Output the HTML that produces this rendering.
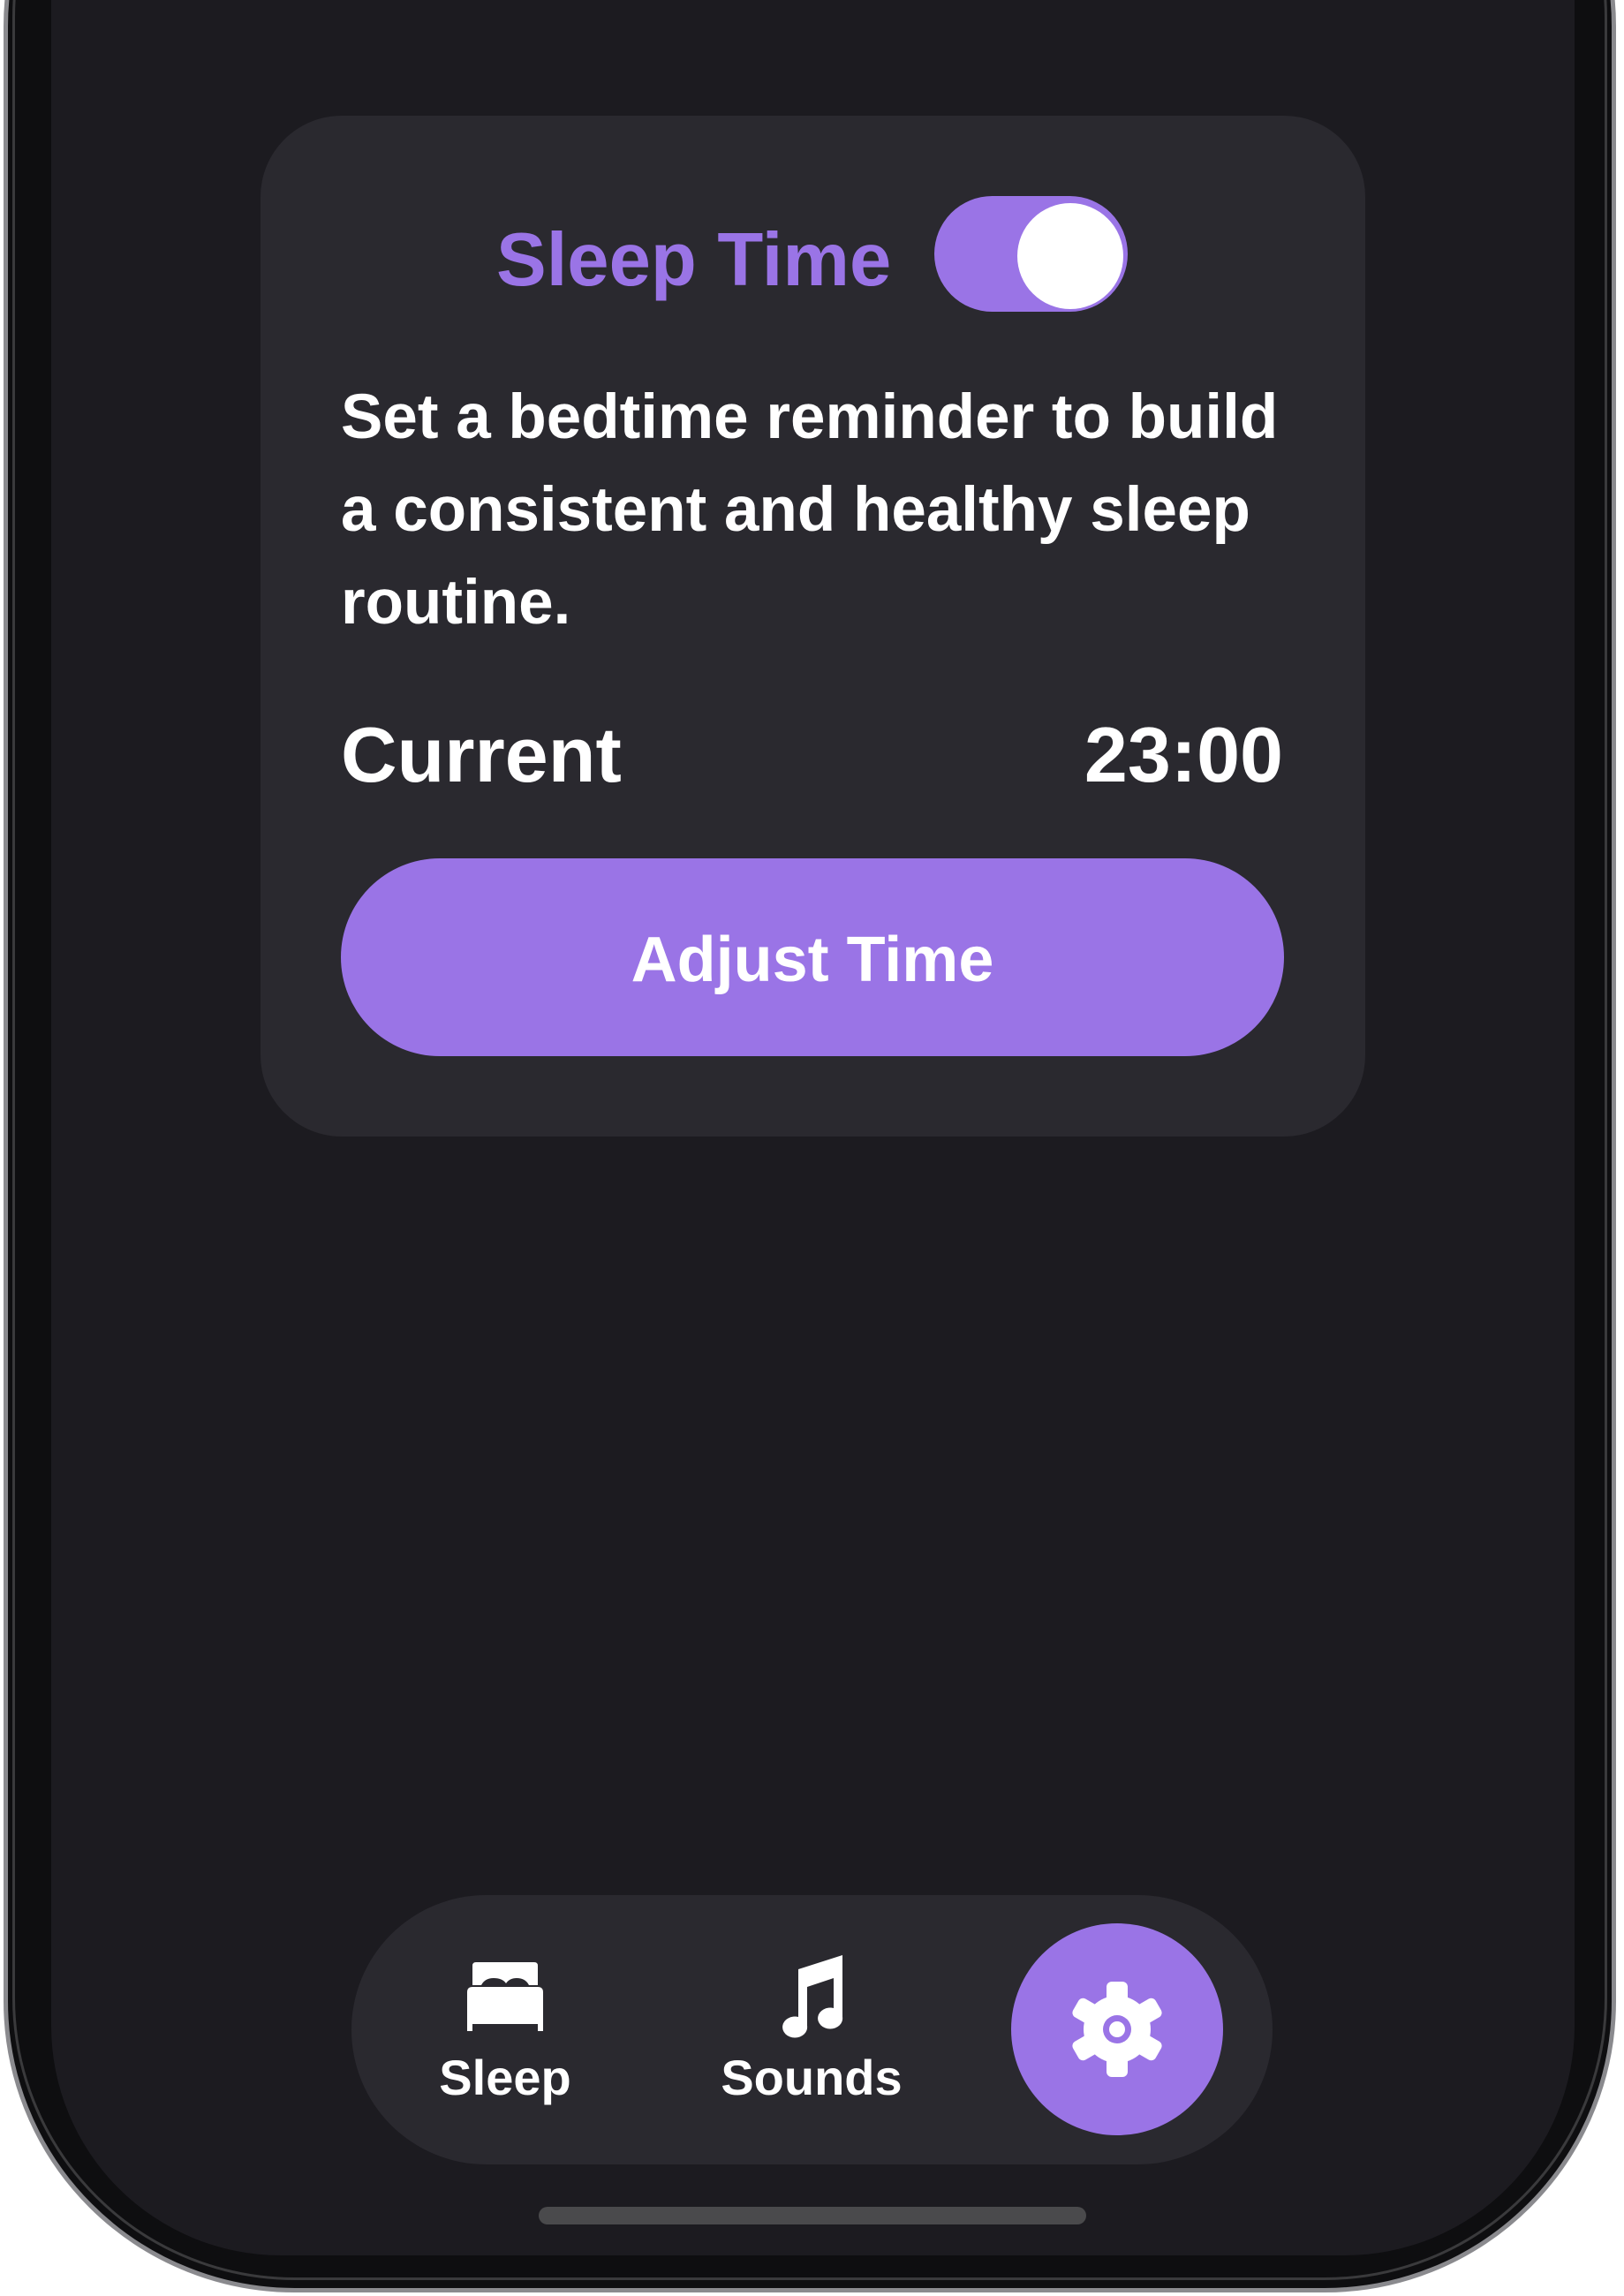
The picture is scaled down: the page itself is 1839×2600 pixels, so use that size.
<!DOCTYPE html>
<html><head><meta charset="utf-8"><style>
html,body{margin:0;padding:0;background:#fff;}
body{width:1839px;height:2600px;position:relative;overflow:hidden;font-family:"Liberation Sans",sans-serif;}
.frame{position:absolute;left:4px;top:-300px;width:1826px;height:2896px;border-radius:330px;background:#0e0e10;border:5px solid #8a8a8e;box-sizing:border-box;}
.frame2{position:absolute;left:14px;top:-300px;width:1806px;height:2882px;border-radius:320px;border:3px solid #3a3a3c;box-sizing:border-box;}
.screen{position:absolute;left:58px;top:-300px;width:1725px;height:2854px;border-radius:260px;background:#1c1b20;}
.card{position:absolute;left:295px;top:131px;width:1251px;height:1156px;border-radius:92px;background:#2a292f;}
.title{position:absolute;left:562px;top:240px;font-size:85px;font-weight:bold;color:#9a74e6;line-height:110px;white-space:nowrap;}
.toggle{position:absolute;left:1058px;top:222px;width:219px;height:131px;border-radius:66px;background:#9a74e6;}
.knob{position:absolute;left:1152px;top:230px;width:120px;height:120px;border-radius:50%;background:#fff;}
.body{position:absolute;left:386px;top:420px;font-size:71px;font-weight:bold;color:#fff;line-height:105px;white-space:nowrap;}
.cur{position:absolute;left:386px;top:800px;font-size:88px;font-weight:bold;color:#fff;line-height:110px;}
.time{position:absolute;right:386px;top:800px;font-size:88px;font-weight:bold;color:#fff;line-height:110px;}
.btn{position:absolute;left:386px;top:972px;width:1068px;height:224px;border-radius:112px;background:#9a74e6;color:#fff;font-size:72px;font-weight:bold;text-align:center;line-height:230px;}
.nav{position:absolute;left:398px;top:2146px;width:1043px;height:305px;border-radius:153px;background:#2a292f;}
.gear{position:absolute;left:1145px;top:2178px;width:240px;height:240px;border-radius:50%;background:#9a74e6;}
.lbl{position:absolute;top:2318px;font-size:56px;font-weight:bold;color:#fff;text-align:center;width:300px;line-height:70px;}
.home{position:absolute;left:610px;top:2499px;width:620px;height:20px;border-radius:10px;background:#4a4a4c;}
</style></head><body>
<div class="frame"></div>
<div class="frame2"></div>
<div class="screen"></div>
<div class="card"></div>
<div class="title">Sleep Time</div>
<div class="toggle"></div>
<div class="knob"></div>
<div class="body">Set a bedtime reminder to build<br>a consistent and healthy sleep<br>routine.</div>
<div class="cur">Current</div>
<div class="time">23:00</div>
<div class="btn">Adjust Time</div>
<div class="nav"></div>
<svg style="position:absolute;left:525px;top:2222px" width="94" height="78" viewBox="0 0 94 78">
<path fill="#fff" d="M10 4 Q10 0 14 0 H80 Q84 0 84 4 V26 H74 Q70 18 60 18 Q52 18 48 24 Q44 18 34 18 Q24 18 20 26 H10 Z"/>
<path fill="#fff" d="M4 34 Q4 28 10 28 H84 Q90 28 90 34 V78 H84 V70 H10 V78 H4 Z"/>
</svg>
<svg style="position:absolute;left:880px;top:2212px" width="80" height="96" viewBox="0 0 80 96">
<path fill="#fff" d="M24 18 L74 2 V72 A14 12 0 1 1 64 62 V28 L34 38 V82 A14 12 0 1 1 24 72 Z"/>
</svg>
<div class="gear"></div>
<svg style="position:absolute;left:1210px;top:2243px" width="110" height="110" viewBox="-55 -55 110 110">
<g fill="#fff">
<circle r="38"/>
<g id="t"><rect x="-12" y="-54" width="24" height="24" rx="6"/></g>
<use href="#t" transform="rotate(60)"/><use href="#t" transform="rotate(120)"/><use href="#t" transform="rotate(180)"/><use href="#t" transform="rotate(240)"/><use href="#t" transform="rotate(300)"/>
</g>
<circle r="16" fill="#9a74e6"/><circle r="9" fill="#fff"/>
</svg>
<div class="lbl" style="left:422px">Sleep</div>
<div class="lbl" style="left:769px">Sounds</div>
<div class="home"></div>
</body></html>
